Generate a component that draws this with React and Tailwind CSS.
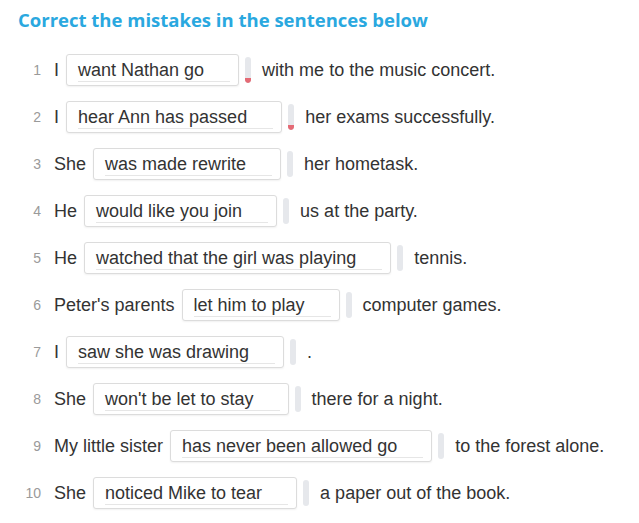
const rows = [
  { n: 1, pre: "I", answer: "want Nathan go", post: "with me to the music concert.", wrong: true },
  { n: 2, pre: "I", answer: "hear Ann has passed", post: "her exams successfully.", wrong: true },
  { n: 3, pre: "She", answer: "was made rewrite", post: "her hometask." },
  { n: 4, pre: "He", answer: "would like you join", post: "us at the party." },
  { n: 5, pre: "He", answer: "watched that the girl was playing", post: "tennis." },
  { n: 6, pre: "Peter's parents", answer: "let him to play", post: "computer games." },
  { n: 7, pre: "I", answer: "saw she was drawing", post: "." },
  { n: 8, pre: "She", answer: "won't be let to stay", post: "there for a night." },
  { n: 9, pre: "My little sister", answer: "has never been allowed go", post: "to the forest alone." },
  { n: 10, pre: "She", answer: "noticed Mike to tear", post: "a paper out of the book." },
];

function Row({ n, pre, answer, post, wrong }) {
  return (
    <div className="flex items-center h-[47px]">
      <span className="w-[23px] text-right text-[14px] text-[#9a9a9a]">{n}</span>
      <span className="ml-[13px] text-[18px] text-[#333]">{pre}</span>
      <div className="ml-[7px] h-[32px] flex items-center pl-[11px] pr-[8px] bg-white border border-[#dcdcdc] rounded-[3px] shadow-[0_1px_2px_rgba(0,0,0,0.06)]">
        <span className="pr-[26px] text-[18px] leading-[22px] text-[#333] border-b border-[#e6e6e6]">
          {answer}
        </span>
      </div>
      <div className="ml-[6px] w-[6px] h-[26px] rounded-[3px] bg-[#e6e8ec] flex flex-col justify-end overflow-hidden">
        {wrong && <div className="h-[5px] bg-[#e46a75] rounded-b-[3px]" />}
      </div>
      <span className="ml-[11px] text-[18px] text-[#333]">{post}</span>
    </div>
  );
}

export default function App() {
  return (
    <div className="w-[639px] h-[523px] bg-white font-['Liberation_Sans',Arial,sans-serif] pl-[18px] overflow-hidden">
      <h1 className="pt-[6px] h-[47px] text-[18.5px] font-bold text-[#2aa8df] font-['Open_Sans',sans-serif]">
        Correct the mistakes in the sentences below
      </h1>
      <div className="-mt-[0.5px]">
        {rows.map((r) => (
          <Row key={r.n} {...r} />
        ))}
      </div>
    </div>
  );
}
